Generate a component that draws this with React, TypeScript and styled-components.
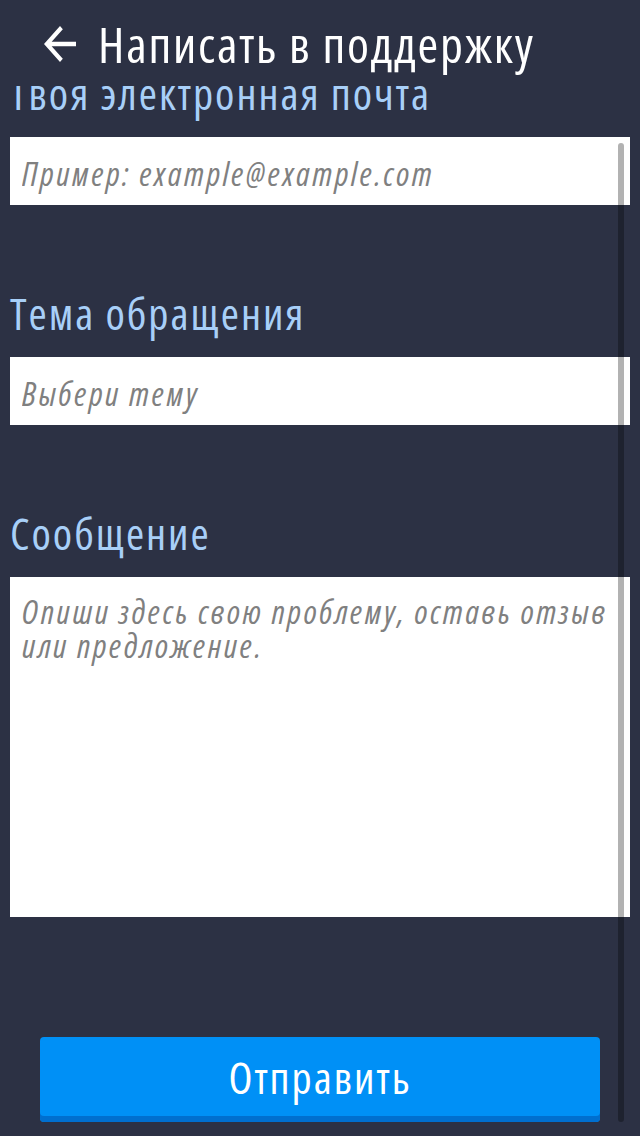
import React from "react";
import styled, { createGlobalStyle } from "styled-components";

const FONT = `"Open Sans", "Noto Sans", sans-serif`;

const GlobalStyle = createGlobalStyle`
	html, body {
		margin: 0;
		padding: 0;
		background-color: #2c3144;
	}
	* {
		box-sizing: border-box;
	}
`;

const Screen = styled.div`
	position: relative;
	width: 640px;
	height: 1136px;
	display: flex;
	flex-direction: column;
	overflow: hidden;
	background-color: #2c3144;
	font-family: ${FONT};
	font-stretch: 75%;
`;

const Header = styled.div`
	height: 86px;
	flex-shrink: 0;
	display: flex;
	align-items: flex-start;
	padding: 26px 0 0 44px;
	gap: 22px;
	background-color: #2c3144;
	z-index: 2;
`;

const BackButton = styled.button`
	border: none;
	background: none;
	padding: 0;
	width: 32px;
	height: 36px;
	display: flex;
	cursor: pointer;
`;

const Title = styled.h1`
	margin: -12px 0 0;
	font-size: 50px;
	line-height: 60px;
	font-weight: 400;
	letter-spacing: 0.035em;
	color: #ffffff;
	white-space: nowrap;
`;

const Viewport = styled.div`
	flex: 1;
	overflow: hidden;
`;

const Content = styled.div`
	margin-top: -19px;
	display: flex;
	flex-direction: column;
`;

const Field = styled.div<{ $gap: number }>`
	display: flex;
	flex-direction: column;
	margin-bottom: ${(p) => p.$gap}px;
`;

const Label = styled.label`
	padding-left: 10px;
	font-size: 44px;
	line-height: 52px;
	letter-spacing: 0.045em;
	color: #a8cff8;
	margin-bottom: 18px;
	white-space: nowrap;
`;

const TextInput = styled.input`
	margin: 0 10px;
	height: 68px;
	border: none;
	border-radius: 0;
	outline: none;
	padding: 4px 12px 0;
	background-color: #ffffff;
	font-family: ${FONT};
	font-stretch: 75%;
	font-size: 33px;
	letter-spacing: 0.075em;
	color: #333333;
	&::placeholder {
		color: #808080;
		font-style: italic;
	}
`;

const TextArea = styled.textarea`
	margin: 0 10px;
	height: 340px;
	border: none;
	border-radius: 0;
	outline: none;
	resize: none;
	padding: 18px 12px 0;
	background-color: #ffffff;
	font-family: ${FONT};
	font-stretch: 75%;
	font-size: 33px;
	line-height: 34px;
	letter-spacing: 0.075em;
	color: #333333;
	&::placeholder {
		color: #808080;
		font-style: italic;
	}
`;

const SendButton = styled.button`
	margin: 0 40px;
	height: 85px;
	border: none;
	border-radius: 4px;
	background-color: #0090f6;
	box-shadow: inset 0 -6px 0 #006fcf;
	padding: 0 0 6px;
	font-family: ${FONT};
	font-stretch: 75%;
	font-size: 44px;
	letter-spacing: 0.045em;
	color: #ffffff;
	cursor: pointer;
`;

const ScrollBar = styled.div`
	position: absolute;
	right: 16px;
	top: 143px;
	bottom: 14px;
	width: 6px;
	border-radius: 3px;
	background-color: rgba(0, 0, 0, 0.3);
	pointer-events: none;
`;

function BackArrow() {
	return (
		<svg width="32" height="36" viewBox="4 4 16 16" preserveAspectRatio="none">
			<path
				d="M20 11H7.83l5.59-5.59L12 4l-8 8 8 8 1.41-1.41L7.83 13H20v-2z"
				fill="#ffffff"
			/>
		</svg>
	);
}

export default function App() {
	return (
		<>
			<GlobalStyle />
			<Screen>
				<Header>
					<BackButton aria-label="Назад">
						<BackArrow />
					</BackButton>
					<Title>Написать в поддержку</Title>
				</Header>
				<Viewport>
					<Content>
						<Field $gap={82}>
							<Label htmlFor="email">Твоя электронная почта</Label>
							<TextInput id="email" placeholder="Пример: example@example.com" />
						</Field>
						<Field $gap={82}>
							<Label htmlFor="topic">Тема обращения</Label>
							<TextInput id="topic" placeholder="Выбери тему" />
						</Field>
						<Field $gap={120}>
							<Label htmlFor="message">Сообщение</Label>
							<TextArea
								id="message"
								placeholder="Опиши здесь свою проблему, оставь отзыв или предложение."
							/>
						</Field>
						<SendButton>Отправить</SendButton>
					</Content>
				</Viewport>
				<ScrollBar />
			</Screen>
		</>
	);
}
